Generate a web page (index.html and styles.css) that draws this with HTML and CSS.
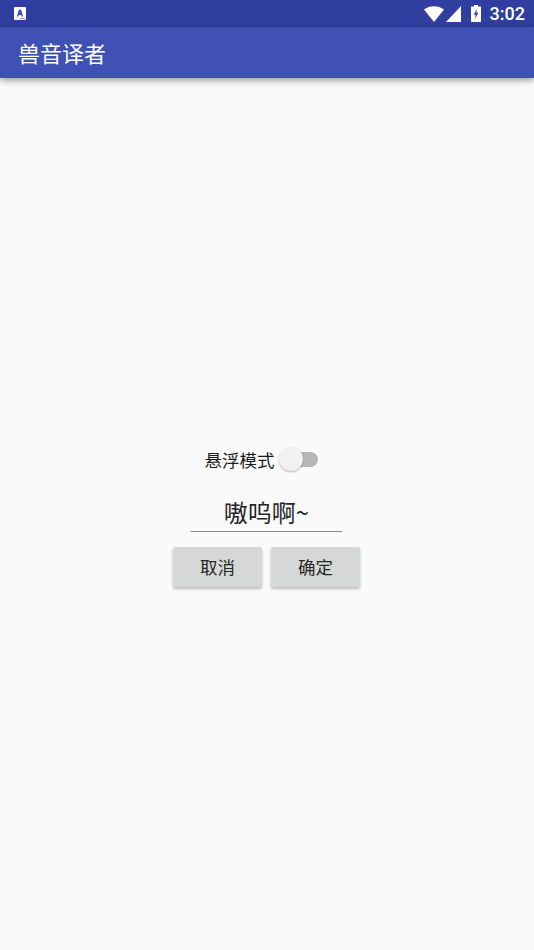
FILE: index.html
```html
<!DOCTYPE html>
<html lang="zh">
<head>
    <meta charset="UTF-8">
    <meta name="viewport" content="width=device-width, initial-scale=1.0">
    <title>兽音译者</title>
    <link rel="stylesheet" href="styles.css">
</head>
<body>
    <div class="status-bar">
        <svg class="notify-icon" width="12" height="13" viewBox="0 0 12 13">
            <rect width="12" height="13" rx="1" fill="#fff"/>
            <path d="M2.8 9.6 L5 2.4 H7 L9.2 9.6 H7.6 L7.2 8 H4.8 L4.4 9.6 Z" fill="#3f51a8"/>
            <rect x="6" y="11" width="5" height="1" fill="#8a93c8"/>
        </svg>
        <div class="status-right">
            <svg width="20" height="16" viewBox="0 0 20 16">
                <path d="M0 3.6 C5.5 -1 14.5 -1 20 3.6 L10 16 Z" fill="#fff"/>
            </svg>
            <svg class="signal" width="15" height="16" viewBox="0 0 15 16">
                <path d="M15 0 V16 H0 Z" fill="#fff"/>
            </svg>
            <svg class="battery" width="10" height="17" viewBox="0 0 10 17">
                <path d="M3 0 H7 V1.5 H10 V17 H0 V1.5 H3 Z" fill="#fff"/>
                <path d="M5.8 3.8 L2.8 9.8 H4.6 L4.2 14 L7.2 7.8 H5.4 Z" fill="#303f9f"/>
            </svg>
            <span class="clock">3:02</span>
        </div>
    </div>
    <header class="app-bar">兽音译者</header>
    <main class="content">
        <div class="mode-row">
            <span class="mode-label">悬浮模式</span>
            <div class="switch">
                <div class="switch-track"></div>
                <div class="switch-thumb"></div>
            </div>
        </div>
        <div class="text-field">嗷呜啊~</div>
        <div class="buttons">
            <button class="btn">取消</button>
            <button class="btn">确定</button>
        </div>
    </main>
</body>
</html>
```

FILE: styles.css
```css
* {
    box-sizing: border-box;
}
html, body {
    height: 100%;
}
body {
    margin: 0;
    display: flex;
    flex-direction: column;
    background: #fafafa;
    font-family: "Noto Sans CJK SC", "Roboto", sans-serif;
    overflow: hidden;
}
.status-bar {
    height: 27px;
    flex: none;
    display: flex;
    align-items: center;
    justify-content: space-between;
    padding: 0 9px 0 14px;
    background: #303f9f;
}
.status-right {
    display: flex;
    align-items: center;
}
.signal {
    margin-left: 2px;
}
.battery {
    margin-left: 10px;
}
.clock {
    margin-left: 9px;
    color: #fff;
    font-family: "Roboto", sans-serif;
    font-size: 18px;
    font-weight: 500;
    line-height: 27px;
}
.app-bar {
    height: 51px;
    flex: none;
    padding: 0 18px;
    background: #3f51b5;
    color: #fff;
    font-size: 22px;
    line-height: 51px;
    box-shadow: 0 2px 7px rgba(0, 0, 0, 0.42);
}
.content {
    flex: 1;
    display: flex;
    flex-direction: column;
    align-items: center;
    padding-top: 365px;
}
.mode-row {
    display: flex;
    align-items: center;
    height: 32px;
    margin-right: 12px;
}
.mode-label {
    font-size: 17.5px;
    color: #1c1c1c;
}
.switch {
    position: relative;
    width: 39px;
    height: 24px;
    margin-left: 4px;
}
.switch-track {
    position: absolute;
    left: 3px;
    top: 5px;
    width: 36px;
    height: 15px;
    border-radius: 8px;
    background: #b6b6b6;
}
.switch-thumb {
    position: absolute;
    left: 0;
    top: 0;
    width: 24px;
    height: 24px;
    border-radius: 50%;
    background: #f1f1f1;
    box-shadow: 0 1px 2px rgba(0, 0, 0, 0.3);
}
.text-field {
    width: 151px;
    height: 39px;
    margin-top: 18px;
    margin-right: 1px;
    border-bottom: 1px solid #8a8a8a;
    color: #262626;
    font-size: 24px;
    line-height: 38px;
    text-align: center;
}
.buttons {
    display: flex;
    gap: 9px;
    margin-top: 15px;
    margin-right: 1px;
}
.btn {
    width: 89px;
    height: 40px;
    padding: 0 0 2px;
    border: none;
    border-radius: 2px;
    background: #d6d7d7;
    color: #262626;
    font-family: inherit;
    font-size: 17.5px;
    box-shadow: 0 2px 3px rgba(0, 0, 0, 0.25);
}
```
